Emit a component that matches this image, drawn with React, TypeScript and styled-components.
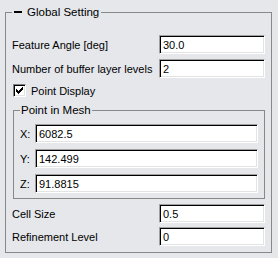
import styled, { createGlobalStyle } from "styled-components";

const GlobalStyle = createGlobalStyle`
  html, body {
    margin: 0;
    height: 100%;
    background: #e5e7eb;
  }
  body {
    font-family: "Liberation Sans", Arial, sans-serif;
    font-size: 11px;
    color: #000;
  }
`;

const Page = styled.div`
  padding: 5px 6px 6px 5px;
`;

const GroupBox = styled.fieldset<{ $inner?: boolean }>`
  margin: ${(p) => (p.$inner ? "6px 0 0 1px" : "0")};
  padding: ${(p) => (p.$inner ? "0 6px 5px 6px" : "0 6px 6px 6px")};
  border: 1px solid #888;
  min-inline-size: 0;
`;

const Legend = styled.legend<{ $inner?: boolean }>`
  display: flex;
  align-items: center;
  gap: 5px;
  height: 14px;
  line-height: 14px;
  padding: ${(p) => (p.$inner ? "0 1px" : "0 2px")};
  font-size: ${(p) => (p.$inner ? "11.5px" : "11.5px")};
`;

const Collapse = styled.span`
  width: 8px;
  height: 2px;
  background: #000;
`;

const Form = styled.div<{ $top: number; $gap: number }>`
  display: grid;
  grid-template-columns: 1fr 106px;
  row-gap: ${(p) => p.$gap}px;
  margin-top: ${(p) => p.$top}px;
  align-items: center;
`;

const XYZForm = styled.div`
  display: grid;
  grid-template-columns: 15px 1fr;
  row-gap: 6px;
  margin-top: 7px;
  align-items: center;
`;

const Label = styled.span`
  white-space: nowrap;
`;

const Field = styled.input`
  box-sizing: border-box;
  width: 100%;
  height: 19px;
  margin: 0;
  padding: 0 3px;
  font: inherit;
  color: #000;
  background: #fff;
  border: 1px solid;
  border-color: #a0a0a0 #fff #fff #a0a0a0;
  box-shadow: inset 1px 1px 0 #000, inset -1px -1px 0 #e3e3e3;
  outline: none;
`;

const CheckRow = styled.label`
  display: flex;
  align-items: center;
  gap: 5px;
  margin: 6px 0 0 1px;
  height: 13px;
`;

const CheckBox = styled.span`
  box-sizing: border-box;
  width: 13px;
  height: 13px;
  background: #fff;
  border: 1px solid;
  border-color: #808080 #fff #fff #808080;
  box-shadow: inset 1px 1px 0 #000, inset -1px -1px 0 #e3e3e3;
  display: flex;
  align-items: center;
  justify-content: center;
`;

const Check = () => (
  <svg width="7" height="7" viewBox="0 0 7 7" shapeRendering="crispEdges">
    <path
      d="M0 2h1v1h1v1h1v-1h1v-1h1v-1h1v-1h1v3h-1v1h-1v1h-1v1h-1v1h-1v-1h-1v-1h-1v-1h-1z"
      fill="#000"
    />
  </svg>
);

export default function App() {
  return (
    <>
      <GlobalStyle />
      <Page>
        <GroupBox>
          <Legend>
            <Collapse />
            Global Setting
          </Legend>
          <Form $top={16} $gap={5}>
            <Label>Feature Angle [deg]</Label>
            <Field defaultValue="30.0" />
            <Label>Number of buffer layer levels</Label>
            <Field defaultValue="2" />
          </Form>
          <CheckRow>
            <CheckBox>
              <Check />
            </CheckBox>
            Point Display
          </CheckRow>
          <GroupBox $inner>
            <Legend $inner>Point in Mesh</Legend>
            <XYZForm>
              <Label>X:</Label>
              <Field defaultValue="6082.5" />
              <Label>Y:</Label>
              <Field defaultValue="142.499" />
              <Label>Z:</Label>
              <Field defaultValue="91.8815" />
            </XYZForm>
          </GroupBox>
          <Form $top={5} $gap={4}>
            <Label>Cell Size</Label>
            <Field defaultValue="0.5" />
            <Label>Refinement Level</Label>
            <Field defaultValue="0" />
          </Form>
        </GroupBox>
      </Page>
    </>
  );
}
